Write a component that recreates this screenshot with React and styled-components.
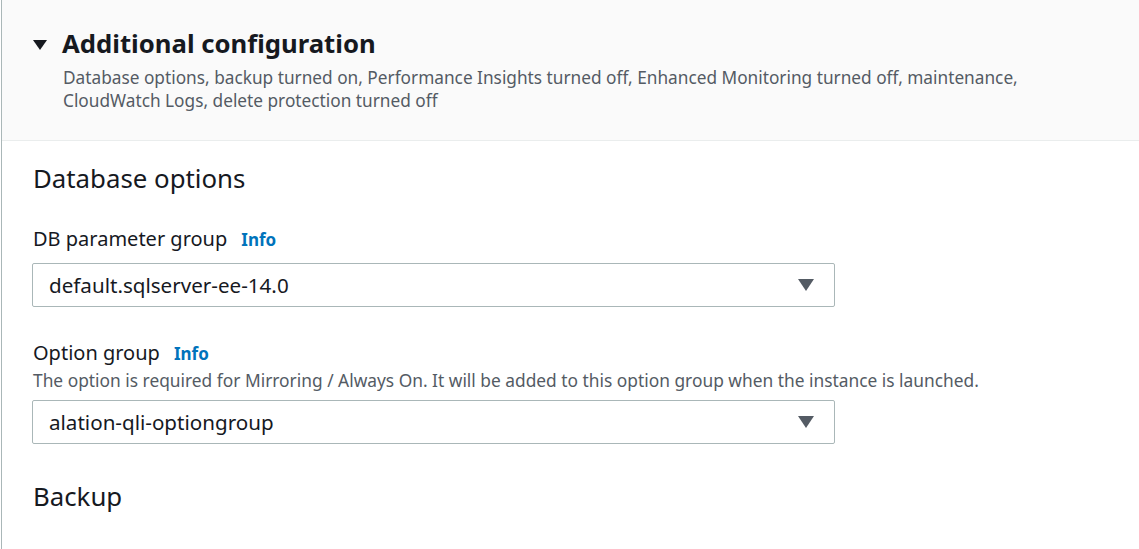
import React from "react";
import styled, { createGlobalStyle } from "styled-components";

const GlobalStyle = createGlobalStyle`
  html, body {
    margin: 0;
    padding: 0;
    background: #ffffff;
  }
  body {
    font-family: "Noto Sans", "Open Sans", Arial, sans-serif;
    color: #16191f;
  }
`;

const Panel = styled.div`
  width: 1139px;
  height: 549px;
  box-sizing: border-box;
  border-left: 1px solid #aab7b8;
  margin-left: 1px;
  background: #ffffff;
  overflow: hidden;
`;

const Header = styled.div`
  background: #fafafa;
  border-bottom: 1px solid #eaeded;
  padding: 27px 20px 30px 31px;
  height: 141px;
  box-sizing: border-box;
`;

const TitleRow = styled.div`
  display: flex;
  align-items: center;
  gap: 15px;
`;

const Caret = styled.span`
  width: 0;
  height: 0;
  border-left: 7px solid transparent;
  border-right: 7px solid transparent;
  border-top: 10px solid #16191f;
  margin-top: 1px;
`;

const Title = styled.h2`
  margin: 0;
  font-size: 25.7px;
  font-weight: 700;
  line-height: 34px;
  color: #16191f;
`;

const Description = styled.p`
  margin: 5px 0 0 30px;
  font-size: 17.25px;
  line-height: 23px;
  color: #545b64;
  max-width: 990px;
`;

const Body = styled.div`
  padding: 20px 0 0 30px;
`;

const SectionTitle = styled.h3`
  margin: 0 0 ${(p) => p.$gap || 0}px 1px;
  font-size: 25.8px;
  font-weight: 400;
  line-height: 34px;
  color: #16191f;
`;

const Field = styled.div`
  margin-bottom: ${(p) => p.$gap || 0}px;
`;

const LabelRow = styled.div`
  display: flex;
  align-items: baseline;
  gap: 14px;
  padding-left: 1px;
  font-size: 20px;
  line-height: 28px;
  color: #16191f;
`;

const InfoLink = styled.a`
  font-size: 17px;
  font-weight: 700;
  color: #0073bb;
  text-decoration: none;
`;

const Hint = styled.div`
  padding-left: 1px;
  font-size: 17.35px;
  line-height: 24px;
  color: #545b64;
`;

const Select = styled.div`
  margin-top: ${(p) => p.$top || 0}px;
  width: 803px;
  height: 44px;
  box-sizing: border-box;
  border: 1px solid #aab7b8;
  border-radius: 2px;
  display: flex;
  align-items: center;
  justify-content: space-between;
  padding: 0 20px 0 16px;
  font-size: 20.6px;
  color: #16191f;
  background: #ffffff;
`;

const SelectCaret = styled.span`
  width: 0;
  height: 0;
  border-left: 8px solid transparent;
  border-right: 8px solid transparent;
  border-top: 12px solid #545b64;
`;

export default function App() {
  return (
    <>
      <GlobalStyle />
      <Panel>
        <Header>
          <TitleRow>
            <Caret />
            <Title>Additional configuration</Title>
          </TitleRow>
          <Description>
            Database options, backup turned on, Performance Insights turned off, Enhanced Monitoring turned off, maintenance,
            CloudWatch Logs, delete protection turned off
          </Description>
        </Header>
        <Body>
          <SectionTitle $gap={30}>Database options</SectionTitle>
          <Field $gap={32}>
            <LabelRow>
              <span>DB parameter group</span>
              <InfoLink href="#">Info</InfoLink>
            </LabelRow>
            <Select $top={9}>
              <span>default.sqlserver-ee-14.0</span>
              <SelectCaret />
            </Select>
          </Field>
          <Field $gap={35}>
            <LabelRow>
              <span>Option group</span>
              <InfoLink href="#">Info</InfoLink>
            </LabelRow>
            <Hint>
              The option is required for Mirroring / Always On. It will be added to this option group when the instance is launched.
            </Hint>
            <Select $top={8}>
              <span>alation-qli-optiongroup</span>
              <SelectCaret />
            </Select>
          </Field>
          <SectionTitle>Backup</SectionTitle>
        </Body>
      </Panel>
    </>
  );
}
